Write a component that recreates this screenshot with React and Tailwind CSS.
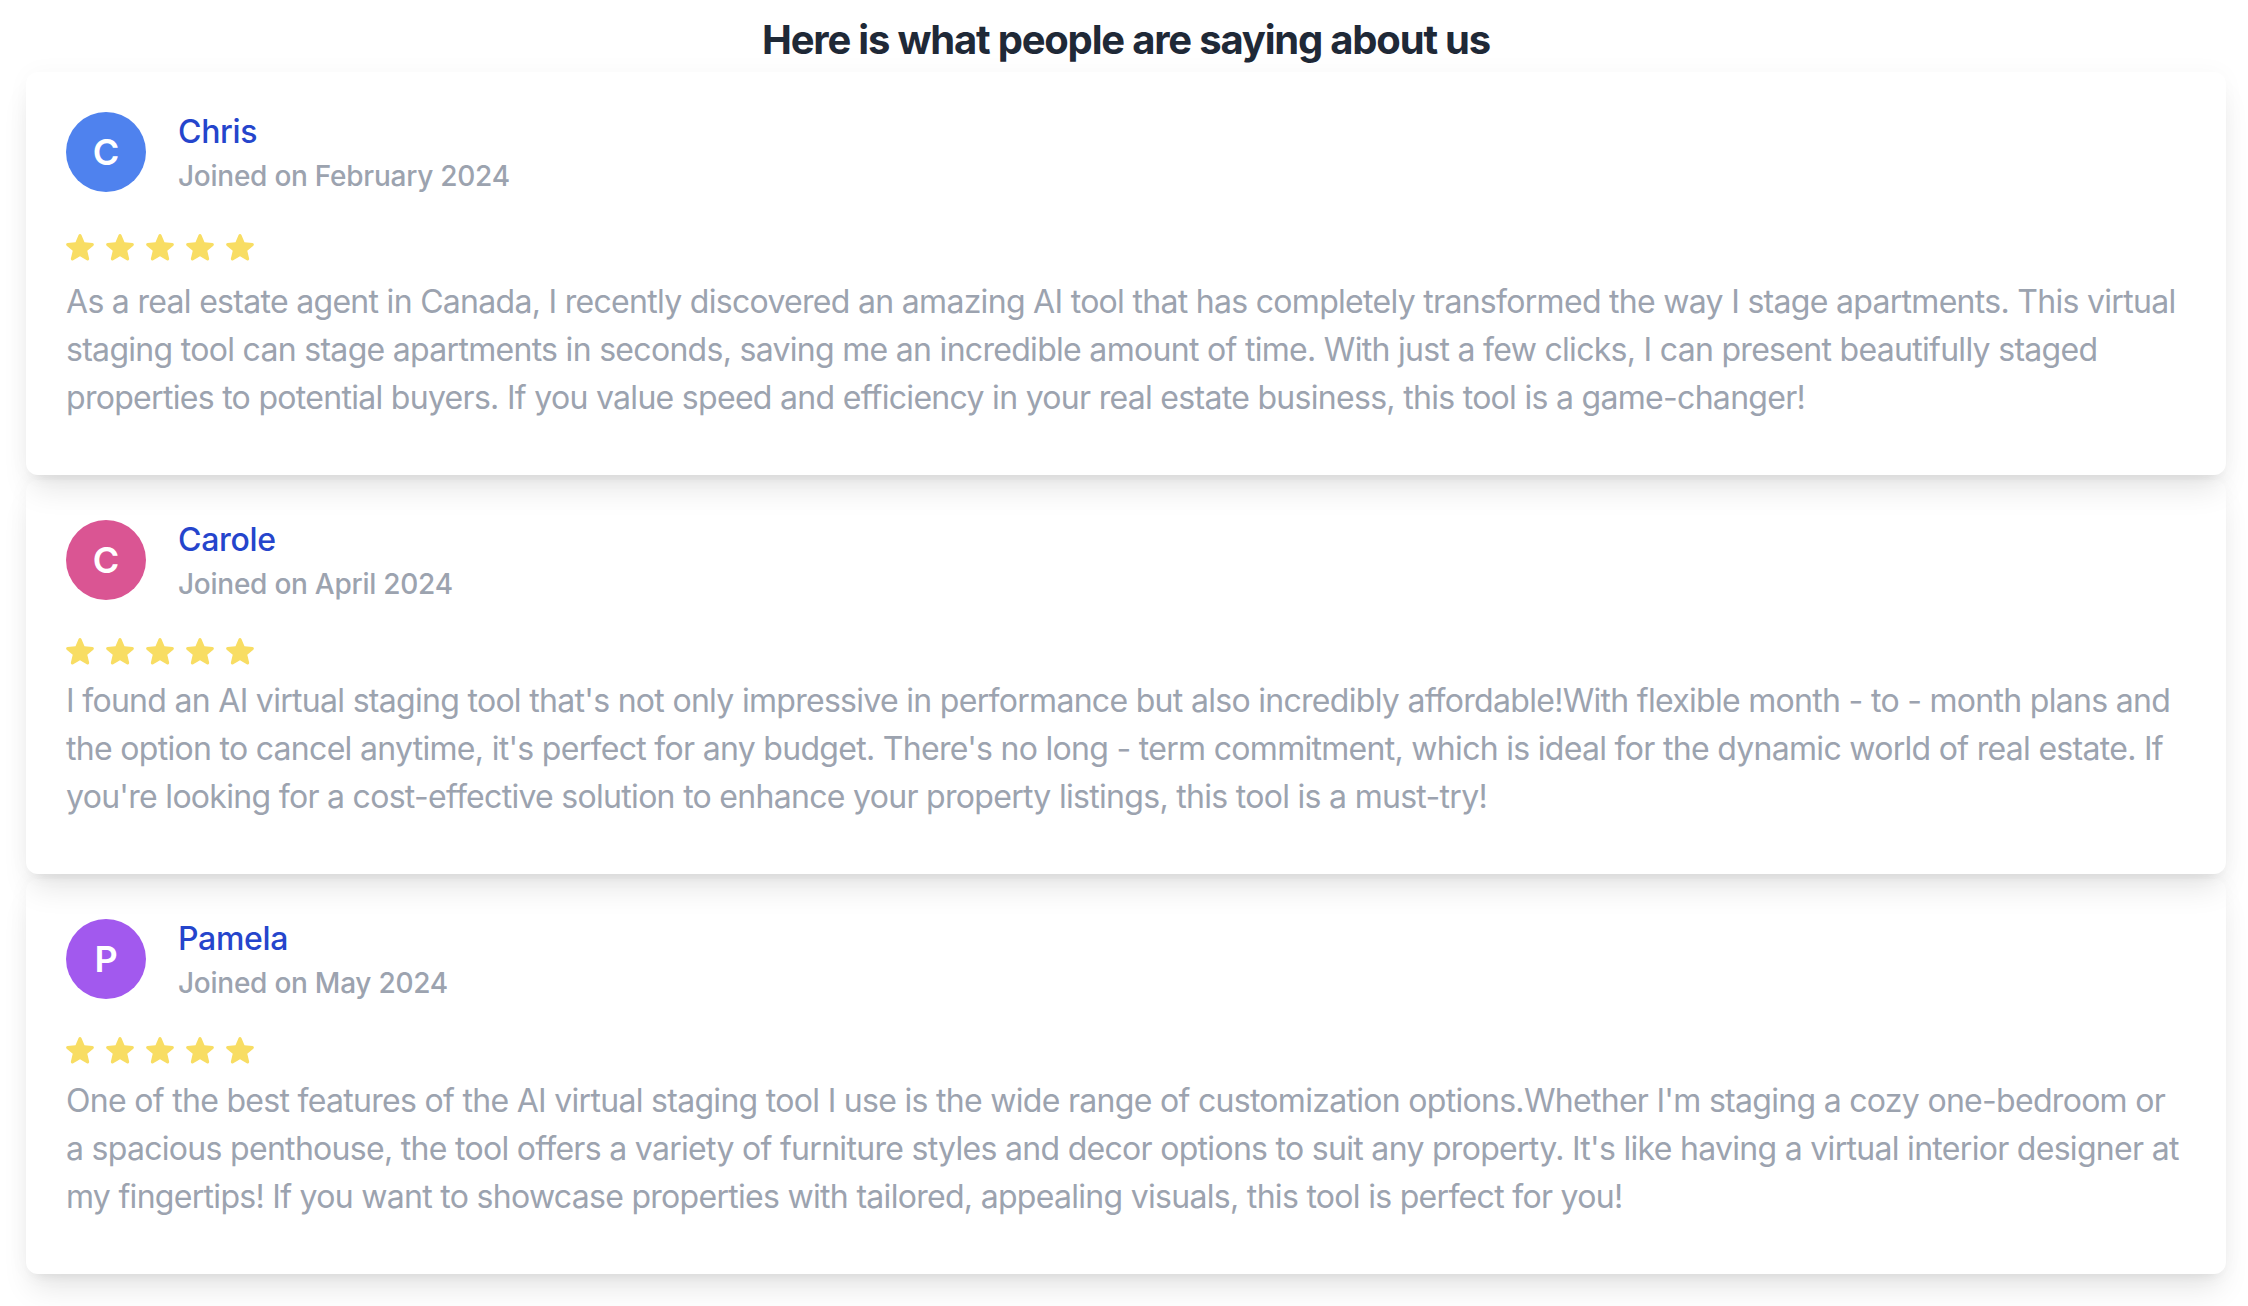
const reviews = [
  {
    name: 'Chris',
    joined: 'Joined on February 2024',
    initial: 'C',
    avatar: 'bg-[#4f82ee]',
    z: 'z-30',
    starGap: 'mt-[38px]',
    textGap: 'mt-[16px]',
    body: 'As a real estate agent in Canada, I recently discovered an amazing AI tool that has completely transformed the way I stage apartments. This virtual staging tool can stage apartments in seconds, saving me an incredible amount of time. With just a few clicks, I can present beautifully staged properties to potential buyers. If you value speed and efficiency in your real estate business, this tool is a game-changer!',
  },
  {
    name: 'Carole',
    joined: 'Joined on April 2024',
    initial: 'C',
    avatar: 'bg-[#da5593]',
    z: 'z-20',
    starGap: 'mt-[34px]',
    textGap: 'mt-[11px]',
    body: "I found an AI virtual staging tool that's not only impressive in performance but also incredibly affordable!With flexible month - to - month plans and the option to cancel anytime, it's perfect for any budget. There's no long - term commitment, which is ideal for the dynamic world of real estate. If you're looking for a cost-effective solution to enhance your property listings, this tool is a must-try!",
  },
  {
    name: 'Pamela',
    joined: 'Joined on May 2024',
    initial: 'P',
    avatar: 'bg-[#a259ee]',
    z: 'z-10',
    starGap: 'mt-[34px]',
    textGap: 'mt-[12px]',
    body: "One of the best features of the AI virtual staging tool I use is the wide range of customization options.Whether I'm staging a cozy one-bedroom or a spacious penthouse, the tool offers a variety of furniture styles and decor options to suit any property. It's like having a virtual interior designer at my fingertips! If you want to showcase properties with tailored, appealing visuals, this tool is perfect for you!",
  },
];

function Star() {
  return (
    <svg viewBox="1.6 2.3 16.8 16.8" className="w-[28px] h-[28px] fill-[#f8dd63]">
      <path d="M10.868 2.884c-.321-.772-1.415-.772-1.736 0l-1.83 4.401-4.753.381c-.833.067-1.171 1.107-.536 1.651l3.62 3.102-1.106 4.637c-.194.813.691 1.456 1.405 1.02L10 15.591l4.069 2.485c.713.436 1.598-.207 1.404-1.02l-1.106-4.637 3.62-3.102c.635-.544.297-1.584-.536-1.65l-4.752-.382-1.831-4.401z" />
    </svg>
  );
}

function ReviewCard({ r }) {
  return (
    <div className={`relative ${r.z} bg-white rounded-[12px] px-[40px] pt-[36px] pb-[53px] shadow-[0_20px_30px_-6px_rgba(0,0,0,0.1),0_8px_12px_-8px_rgba(0,0,0,0.08),0_0_24px_rgba(0,0,0,0.03)]`}>
      {/* header */}
      <div className="flex items-center gap-[32px]">
        <div className={`w-[80px] h-[80px] rounded-full ${r.avatar} flex items-center justify-center text-white text-[36px] font-semibold`}>
          {r.initial}
        </div>
        <div className="flex flex-col">
          <span className="text-[32px] leading-[48px] font-medium tracking-[-0.3px] text-[#2545cc]">{r.name}</span>
          <span className="text-[28px] leading-[40px] font-medium tracking-[-0.25px] text-[#9ca3af]">{r.joined}</span>
        </div>
      </div>

      <div className={`flex gap-[12px] ${r.starGap}`}>
        <Star />
        <Star />
        <Star />
        <Star />
        <Star />
      </div>

      <p className={`${r.textGap} text-[32px] leading-[48px] tracking-[-0.7px] text-[#9ca3af]`}>{r.body}</p>
    </div>
  );
}

export default function App() {
  return (
    <div className="min-h-screen bg-white font-['Inter','Liberation_Sans',sans-serif] pl-[26px] pr-[22px] pb-[31px]">
      <h1 className="pt-[12px] text-center text-[40px] leading-[56px] font-bold tracking-[-1.2px] text-[#1f2937]">
        Here is what people are saying about us
      </h1>

      <div className="mt-[4px] flex flex-col gap-[5px]">
        {reviews.map((r) => (
          <ReviewCard key={r.name} r={r} />
        ))}
      </div>
    </div>
  );
}
